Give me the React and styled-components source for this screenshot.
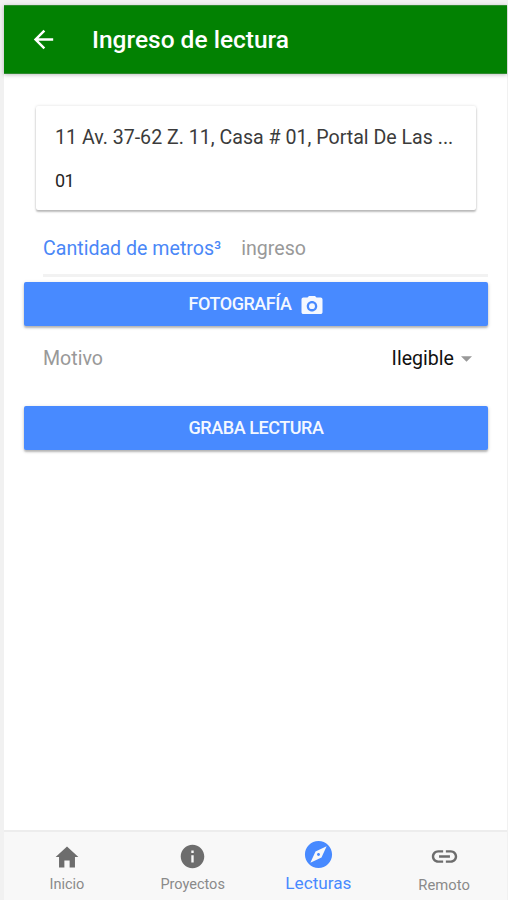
import React from "react";
import styled, { createGlobalStyle } from "styled-components";
import {
  IoMdArrowBack,
  IoMdCamera,
  IoMdHome,
  IoMdInformationCircle,
  IoMdCompass,
  IoMdLink,
} from "react-icons/io";

const GlobalStyle = createGlobalStyle`
  * { box-sizing: border-box; }
  body { margin: 0; background: #f1f1f1; font-family: Roboto, sans-serif; }
  svg { display: block; flex: none; }
`;

const Screen = styled.div`
  height: 900px;
  padding: 5px 1px 0 4px;
  display: flex;
  flex-direction: column;
  overflow: hidden;
`;

const Header = styled.header`
  height: 69px;
  flex: none;
  display: flex;
  align-items: center;
  padding-left: 25px;
  background: #028102;
  color: #fff;
  border: 1px solid #2f8a2f;
  border-width: 1px 0;
  box-shadow: 0 1px 4px rgba(0, 0, 0, 0.25);
  z-index: 1;
`;

const BackButton = styled.button`
  display: flex;
  padding: 0;
  border: 0;
  background: none;
  color: inherit;
`;

const Label = styled.span`
  display: block;
  flex: none;
  font-size: ${(p) => p.$size}px;
  font-weight: ${(p) => p.$weight || 400};
  letter-spacing: ${(p) => p.$spacing || 0}px;
  line-height: 24px;
  white-space: nowrap;
`;

const Title = styled.h1`
  margin: 0 0 0 34px;
  font-size: 24.5px;
  line-height: 30px;
  font-weight: 500;
  white-space: nowrap;
`;

const Content = styled.main`
  flex: 1;
  padding: 32px 19px 0 20px;
  background: #fff;
`;

const Card = styled.section`
  height: 104px;
  margin: 0 12px;
  padding: 20px 20px 0 19px;
  border-radius: 2px;
  background: #fff;
  color: #3b3b3b;
  box-shadow: 0 2px 2px rgba(0, 0, 0, 0.24), 0 0 3px rgba(0, 0, 0, 0.14);
`;

const Address = styled.p`
  margin: 0;
  font-size: 19.6px;
  line-height: 24px;
  white-space: nowrap;
`;

const HouseNumber = styled.p`
  margin: 19px 0 0;
  font-size: 18px;
  line-height: 24px;
  letter-spacing: -0.5px;
  color: #252525;
`;

const ReadingField = styled.label`
  height: 67px;
  margin: 0 0 5px 19px;
  padding-top: 27px;
  display: flex;
  gap: 20px;
  color: #4a87f7;
  border-bottom: 3px solid #f2f2f2;
`;

const Input = styled.input`
  width: 200px;
  height: 24px;
  padding: 0;
  border: 0;
  outline: 0;
  background: none;
  font: 400 19.6px/24px Roboto, sans-serif;
  &::placeholder { color: #999; opacity: 1; }
`;

const ActionButton = styled.button`
  width: 100%;
  height: 44px;
  padding: 0 0 1px;
  display: flex;
  align-items: center;
  justify-content: center;
  gap: 8px;
  border: 0;
  border-radius: 2px;
  background: #488aff;
  color: #f4f8ff;
  font-family: Roboto, sans-serif;
  box-shadow: 0 2px 2px rgba(0, 0, 0, 0.22), 0 1px 4px rgba(0, 0, 0, 0.14);
  svg { margin-top: 2px; }
`;

const ReasonRow = styled.div`
  height: 80px;
  padding: 21px 16px 0 19px;
  display: flex;
  justify-content: space-between;
  color: #999;
`;

const Select = styled.div`
  display: flex;
  height: 24px;
  gap: 7px;
  align-items: center;
  color: #111;
`;

const Caret = styled.svg`
  width: 11px;
  height: 6px;
  fill: #999;
`;

const TabBar = styled.nav`
  height: 70px;
  flex: none;
  display: grid;
  grid-template-columns: repeat(4, 1fr);
  background: #f8f8f8;
  border-top: 2px solid #ededed;
`;

const Tab = styled.div`
  display: flex;
  flex-direction: column;
  align-items: center;
  padding-top: ${(p) => (p.$active ? 6 : 10)}px;
  gap: ${(p) => (p.$active ? 1 : 2)}px;
  color: ${(p) => (p.$active ? "#488aff" : "#8a8a8a")};
  svg { color: ${(p) => (p.$active ? "#488aff" : "#6d6d6d")}; }
`;

const IconSlot = styled.span`
  height: ${(p) => (p.$active ? 32 : 29)}px;
  display: flex;
  align-items: center;
`;

const tabs = [
  { name: "Inicio", Icon: IoMdHome, icon: 28, size: 14.5 },
  { name: "Proyectos", Icon: IoMdInformationCircle, icon: 29, size: 14.5 },
  { name: "Lecturas", Icon: IoMdCompass, icon: 31, size: 17.2, active: true },
  { name: "Remoto", Icon: IoMdLink, icon: 29, size: 14.8 },
];

export default function App() {
  return (
    <>
      <GlobalStyle />
      <Screen>
        <Header>
          <BackButton aria-label="Volver">
            <IoMdArrowBack size={29} />
          </BackButton>
          <Title>Ingreso de lectura</Title>
        </Header>
        <Content>
          <Card>
            <Address>11 Av. 37-62 Z. 11, Casa # 01, Portal De Las ...</Address>
            <HouseNumber>01</HouseNumber>
          </Card>
          <ReadingField>
            <Label $size={19.6}>Cantidad de metros³</Label>
            <Input placeholder="ingreso" />
          </ReadingField>
          <ActionButton>
            <Label $size={18} $weight={500} $spacing={-0.45}>FOTOGRAFÍA</Label>
            <IoMdCamera size={24} />
          </ActionButton>
          <ReasonRow>
            <Label $size={19.6}>Motivo</Label>
            <Select>
              <Label $size={19.6}>Ilegible</Label>
              <Caret viewBox="0 0 12 6"><path d="M0 0h12L6 6z" /></Caret>
            </Select>
          </ReasonRow>
          <ActionButton>
            <Label $size={18} $weight={500} $spacing={-0.45}>GRABA LECTURA</Label>
          </ActionButton>
        </Content>
        <TabBar>
          {tabs.map(({ name, Icon, icon, size, active }) => (
            <Tab key={name} $active={active}>
              <IconSlot $active={active}>
                <Icon size={icon} />
              </IconSlot>
              <Label $size={size}>{name}</Label>
            </Tab>
          ))}
        </TabBar>
      </Screen>
    </>
  );
}
